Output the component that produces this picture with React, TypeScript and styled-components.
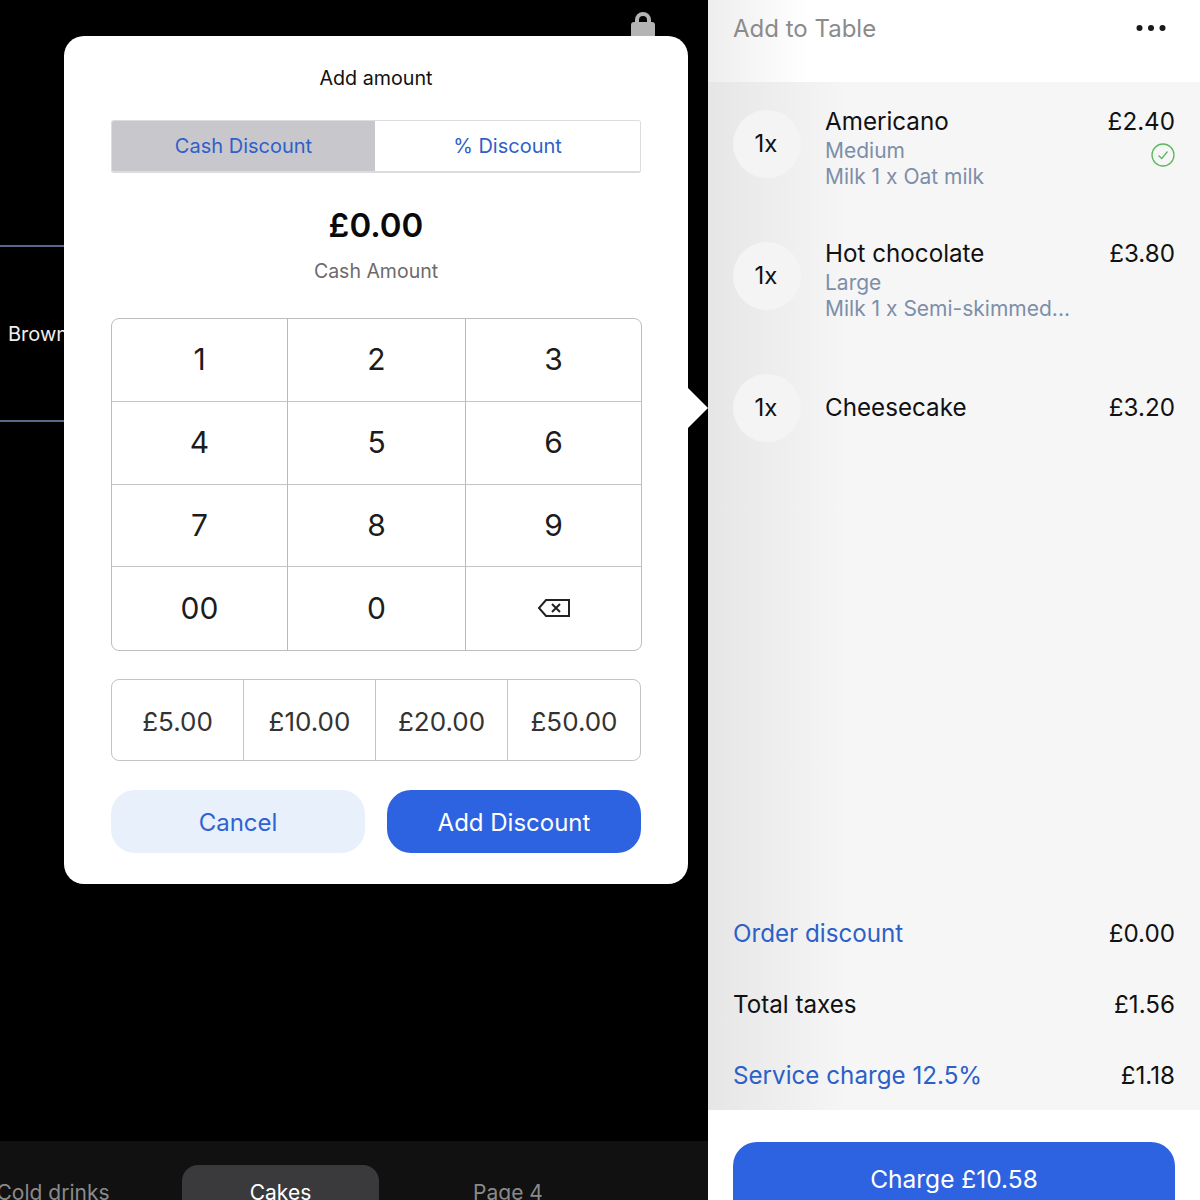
import React from "react";
import styled, { createGlobalStyle } from "styled-components";

const items = [
  { name: "Americano", price: "£2.40", options: ["Medium", "Milk 1 x Oat milk"], paid: true },
  { name: "Hot chocolate", price: "£3.80", options: ["Large", "Milk 1 x Semi-skimmed..."], paid: false },
  { name: "Cheesecake", price: "£3.20", options: [], paid: false },
];

const keys = ["1", "2", "3", "4", "5", "6", "7", "8", "9", "00", "0", "back"];
const quickAmounts = ["£5.00", "£10.00", "£20.00", "£50.00"];

const BackspaceIcon = () => (
  <svg width="34" height="20" viewBox="0 0 34 20" fill="none" stroke="#222" strokeWidth="2">
    <path d="M9 2H32V18H9L2 10Z" strokeLinejoin="miter" />
    <path d="M15 6L23 14M23 6L15 14" />
  </svg>
);

const LockIcon = () => (
  <svg width="24" height="30" viewBox="0 0 24 30" fill="#b4b4b4">
    <path d="M0 13a3 3 0 0 1 3-3h1V8a8 8 0 0 1 16 0v2h1a3 3 0 0 1 3 3v17H0Z M8 10h8V8a4 4 0 0 0-8 0Z" fillRule="evenodd" />
  </svg>
);

const CheckIcon = () => (
  <svg width="24" height="24" viewBox="0 0 24 24" fill="none" stroke="#5cb85f" strokeWidth="1.3">
    <circle cx="12" cy="12" r="11" />
    <path d="M7.5 12.5L10.8 15.5L16.5 8.5" />
  </svg>
);

const DotsIcon = () => (
  <svg width="30" height="8" viewBox="0 0 30 8" fill="#1a1a1a">
    <circle cx="3.5" cy="4" r="3" />
    <circle cx="15" cy="4" r="3" />
    <circle cx="26.5" cy="4" r="3" />
  </svg>
);

const App: React.FC<{}> = () => {
  return (
    <Container>
      <GlobalStyle />
      <Catalogue>
        <LockBar>
          <LockIcon />
        </LockBar>
        <ProductRow>Brownie</ProductRow>
        <Tabs>
          <Tab $width={106}>Cold drinks</Tab>
          <Tab $active $width={197} $gap={76}>Cakes</Tab>
          <Tab $width={100} $gap={79}>Page 4</Tab>
        </Tabs>
        <Popover>
          <Heading>Add amount</Heading>
          <Segments>
            <Segment $active>Cash Discount</Segment>
            <Segment>% Discount</Segment>
          </Segments>
          <Amount>£0.00</Amount>
          <AmountLabel>Cash Amount</AmountLabel>
          <Keypad>
            {keys.map(k => (
              <Key key={k}>{k === "back" ? <BackspaceIcon /> : k}</Key>
            ))}
          </Keypad>
          <QuickRow>
            {quickAmounts.map(a => (
              <Quick key={a}>{a}</Quick>
            ))}
          </QuickRow>
          <Actions>
            <CancelButton>Cancel</CancelButton>
            <AddButton>Add Discount</AddButton>
          </Actions>
        </Popover>
      </Catalogue>
      <Order>
        <OrderHeader>
          <TableLabel>Add to Table</TableLabel>
          <DotsIcon />
        </OrderHeader>
        <OrderBody>
          {items.map(item => (
            <Item key={item.name}>
              <Qty>1x</Qty>
              <Details $hasOptions={item.options.length > 0}>
                <ItemName>{item.name}</ItemName>
                {item.options.map(o => (
                  <ItemOption key={o}>{o}</ItemOption>
                ))}
              </Details>
              <PriceCol $hasOptions={item.options.length > 0}>
                <ItemName>{item.price}</ItemName>
                {item.paid && <CheckIcon />}
              </PriceCol>
            </Item>
          ))}
          <Totals>
            <TotalRow>
              <TotalLabel $link>Order discount</TotalLabel>
              <span>£0.00</span>
            </TotalRow>
            <TotalRow>
              <TotalLabel>Total taxes</TotalLabel>
              <span>£1.56</span>
            </TotalRow>
            <TotalRow>
              <TotalLabel $link>Service charge 12.5%</TotalLabel>
              <span>£1.18</span>
            </TotalRow>
          </Totals>
        </OrderBody>
        <OrderFooter>
          <ChargeButton>Charge £10.58</ChargeButton>
        </OrderFooter>
      </Order>
    </Container>
  );
};

export default App;

const GlobalStyle = createGlobalStyle`
  html, body {
    margin: 0;
    padding: 0;
    background: #000;
  }
  * {
    box-sizing: border-box;
  }
  body {
    font-family: Inter, "Liberation Sans", sans-serif;
  }
`;

const Container = styled.div`
  width: 1200px;
  height: 1200px;
  display: flex;
  overflow: hidden;
`;

const Catalogue = styled.div`
  position: relative;
  width: 708px;
  height: 100%;
  background: #000;
  display: flex;
  flex-direction: column;
`;

const LockBar = styled.div`
  height: 245px;
  padding: 12px 53px 0 0;
  display: flex;
  justify-content: flex-end;
  align-items: flex-start;
`;

const ProductRow = styled.div`
  width: 200px;
  height: 177px;
  padding-left: 8px;
  display: flex;
  align-items: center;
  color: #eee;
  font-size: 20px;
  border-top: 2px solid #57688a;
  border-bottom: 2px solid #57688a;
`;

const Tabs = styled.div`
  margin-top: auto;
  height: 59px;
  padding-top: 24px;
  background: #111;
  display: flex;
  overflow: hidden;
`;

const Tab = styled.div<{ $active?: boolean; $width: number; $gap?: number }>`
  flex: none;
  width: ${p => p.$width}px;
  height: 60px;
  margin-left: ${p => p.$gap || 0}px;
  padding-top: 16px;
  display: flex;
  justify-content: center;
  white-space: nowrap;
  font-size: 21px;
  line-height: 24px;
  border-radius: 16px;
  color: ${p => (p.$active ? "#fff" : "#8a8a8a")};
  background: ${p => (p.$active ? "#3a3a3c" : "transparent")};
`;

const Popover = styled.div`
  position: absolute;
  top: 36px;
  left: 64px;
  width: 624px;
  height: 848px;
  padding: 29px 47px 0;
  background: #fff;
  border-radius: 20px;
  display: flex;
  flex-direction: column;
  &::after {
    content: "";
    position: absolute;
    top: 352px;
    right: -20px;
    border-style: solid;
    border-width: 20px 0 20px 20px;
    border-color: transparent transparent transparent #fff;
  }
`;

const Heading = styled.div`
  text-align: center;
  font-size: 19.7px;
  line-height: 26px;
  color: #111;
`;

const Segments = styled.div`
  margin-top: 29px;
  height: 53px;
  display: grid;
  grid-template-columns: 263px 1fr;
  border: 1px solid #dcdcde;
  border-bottom-width: 2px;
  border-radius: 3px;
  overflow: hidden;
`;

const Segment = styled.div<{ $active?: boolean }>`
  display: flex;
  align-items: center;
  justify-content: center;
  font-size: 20px;
  color: #2f5fc9;
  background: ${p => (p.$active ? "#c8c8cc" : "#fff")};
`;

const Amount = styled.div`
  margin-top: 30px;
  text-align: center;
  font-size: 33px;
  font-weight: 600;
  line-height: 44px;
  color: #0a0a0a;
`;

const AmountLabel = styled.div`
  margin-top: 11px;
  text-align: center;
  font-size: 19.5px;
  line-height: 26px;
  color: #6e6a6c;
`;

const Keypad = styled.div`
  margin-top: 34px;
  width: 531px;
  height: 333px;
  display: grid;
  grid-template-columns: 176px 178px 1fr;
  grid-template-rows: repeat(4, 1fr);
  border: 1px solid #bdbdbd;
  border-radius: 8px;
  overflow: hidden;
`;

const Key = styled.div`
  padding-bottom: 1px;
  display: flex;
  align-items: center;
  justify-content: center;
  font-size: 30px;
  color: #1c1c1c;
  border-right: 1px solid #b9b9b9;
  border-bottom: 1px solid #c4c4c4;
  &:nth-child(3n) {
    border-right: none;
  }
  &:nth-last-child(-n + 3) {
    border-bottom: none;
  }
`;

const QuickRow = styled.div`
  margin-top: 28px;
  height: 82px;
  display: grid;
  grid-template-columns: repeat(4, 1fr);
  border: 1px solid #c4c4c4;
  border-radius: 8px;
  overflow: hidden;
`;

const Quick = styled.div`
  padding-top: 2px;
  display: flex;
  align-items: center;
  justify-content: center;
  font-size: 26px;
  color: #333;
  border-right: 1px solid #c4c4c4;
  &:last-child {
    border-right: none;
  }
`;

const Actions = styled.div`
  margin-top: 29px;
  display: grid;
  grid-template-columns: 254px 254px;
  justify-content: space-between;
`;

const CancelButton = styled.div`
  height: 63px;
  padding-top: 1px;
  border-radius: 24px;
  display: flex;
  align-items: center;
  justify-content: center;
  font-size: 24px;
  color: #2f63d3;
  background: #e8f0fb;
`;

const AddButton = styled(CancelButton)`
  color: #fff;
  background: #2d62e0;
`;

const Order = styled.div`
  width: 492px;
  height: 100%;
  background: #fff;
  display: flex;
  flex-direction: column;
`;

const OrderHeader = styled.div`
  height: 82px;
  padding: 0 34px 26px 25px;
  display: flex;
  align-items: center;
  justify-content: space-between;
  background: linear-gradient(to right, #eeeeee, #fff 100px);
`;

const TableLabel = styled.div`
  font-size: 24px;
  color: #8b8b8b;
`;

const OrderBody = styled.div`
  flex: 1;
  padding: 28px 25px 0;
  display: flex;
  flex-direction: column;
  gap: 64px;
  background: linear-gradient(to right, #e6e6e6, #f6f6f7 140px);
`;

const Item = styled.div`
  height: 68px;
  display: flex;
  align-items: flex-start;
`;

const Qty = styled.div`
  width: 68px;
  height: 68px;
  flex-shrink: 0;
  padding: 0 2px 1px 0;
  border-radius: 50%;
  background: #f4f4f5;
  display: flex;
  align-items: center;
  justify-content: center;
  font-size: 24px;
  color: #111;
`;

const Details = styled.div<{ $hasOptions: boolean }>`
  margin-top: ${p => (p.$hasOptions ? -3 : 19)}px;
  margin-left: 24px;
  flex: 1;
`;

const ItemName = styled.div`
  font-size: 24.2px;
  line-height: 30px;
  color: #111;
  margin-bottom: 1px;
`;

const ItemOption = styled.div`
  font-size: 21px;
  line-height: 26px;
  color: #7d8fa8;
`;

const PriceCol = styled.div<{ $hasOptions: boolean }>`
  margin-top: ${p => (p.$hasOptions ? -3 : 19)}px;
  display: flex;
  flex-direction: column;
  align-items: flex-end;
  gap: 5px;
`;

const Totals = styled.div`
  margin-top: auto;
  display: flex;
  flex-direction: column;
`;

const TotalRow = styled.div`
  height: 71px;
  padding-top: 1px;
  display: flex;
  align-items: center;
  justify-content: space-between;
  font-size: 24.2px;
  color: #111;
`;

const TotalLabel = styled.span<{ $link?: boolean }>`
  color: ${p => (p.$link ? "#2c60c8" : "#111")};
`;

const OrderFooter = styled.div`
  height: 90px;
  padding: 32px 25px 0;
  background: #fff;
`;

const ChargeButton = styled.div`
  height: 80px;
  padding-top: 22px;
  border-radius: 24px;
  background: #2d62e0;
  color: #fff;
  font-size: 24.5px;
  line-height: 30px;
  text-align: center;
`;
